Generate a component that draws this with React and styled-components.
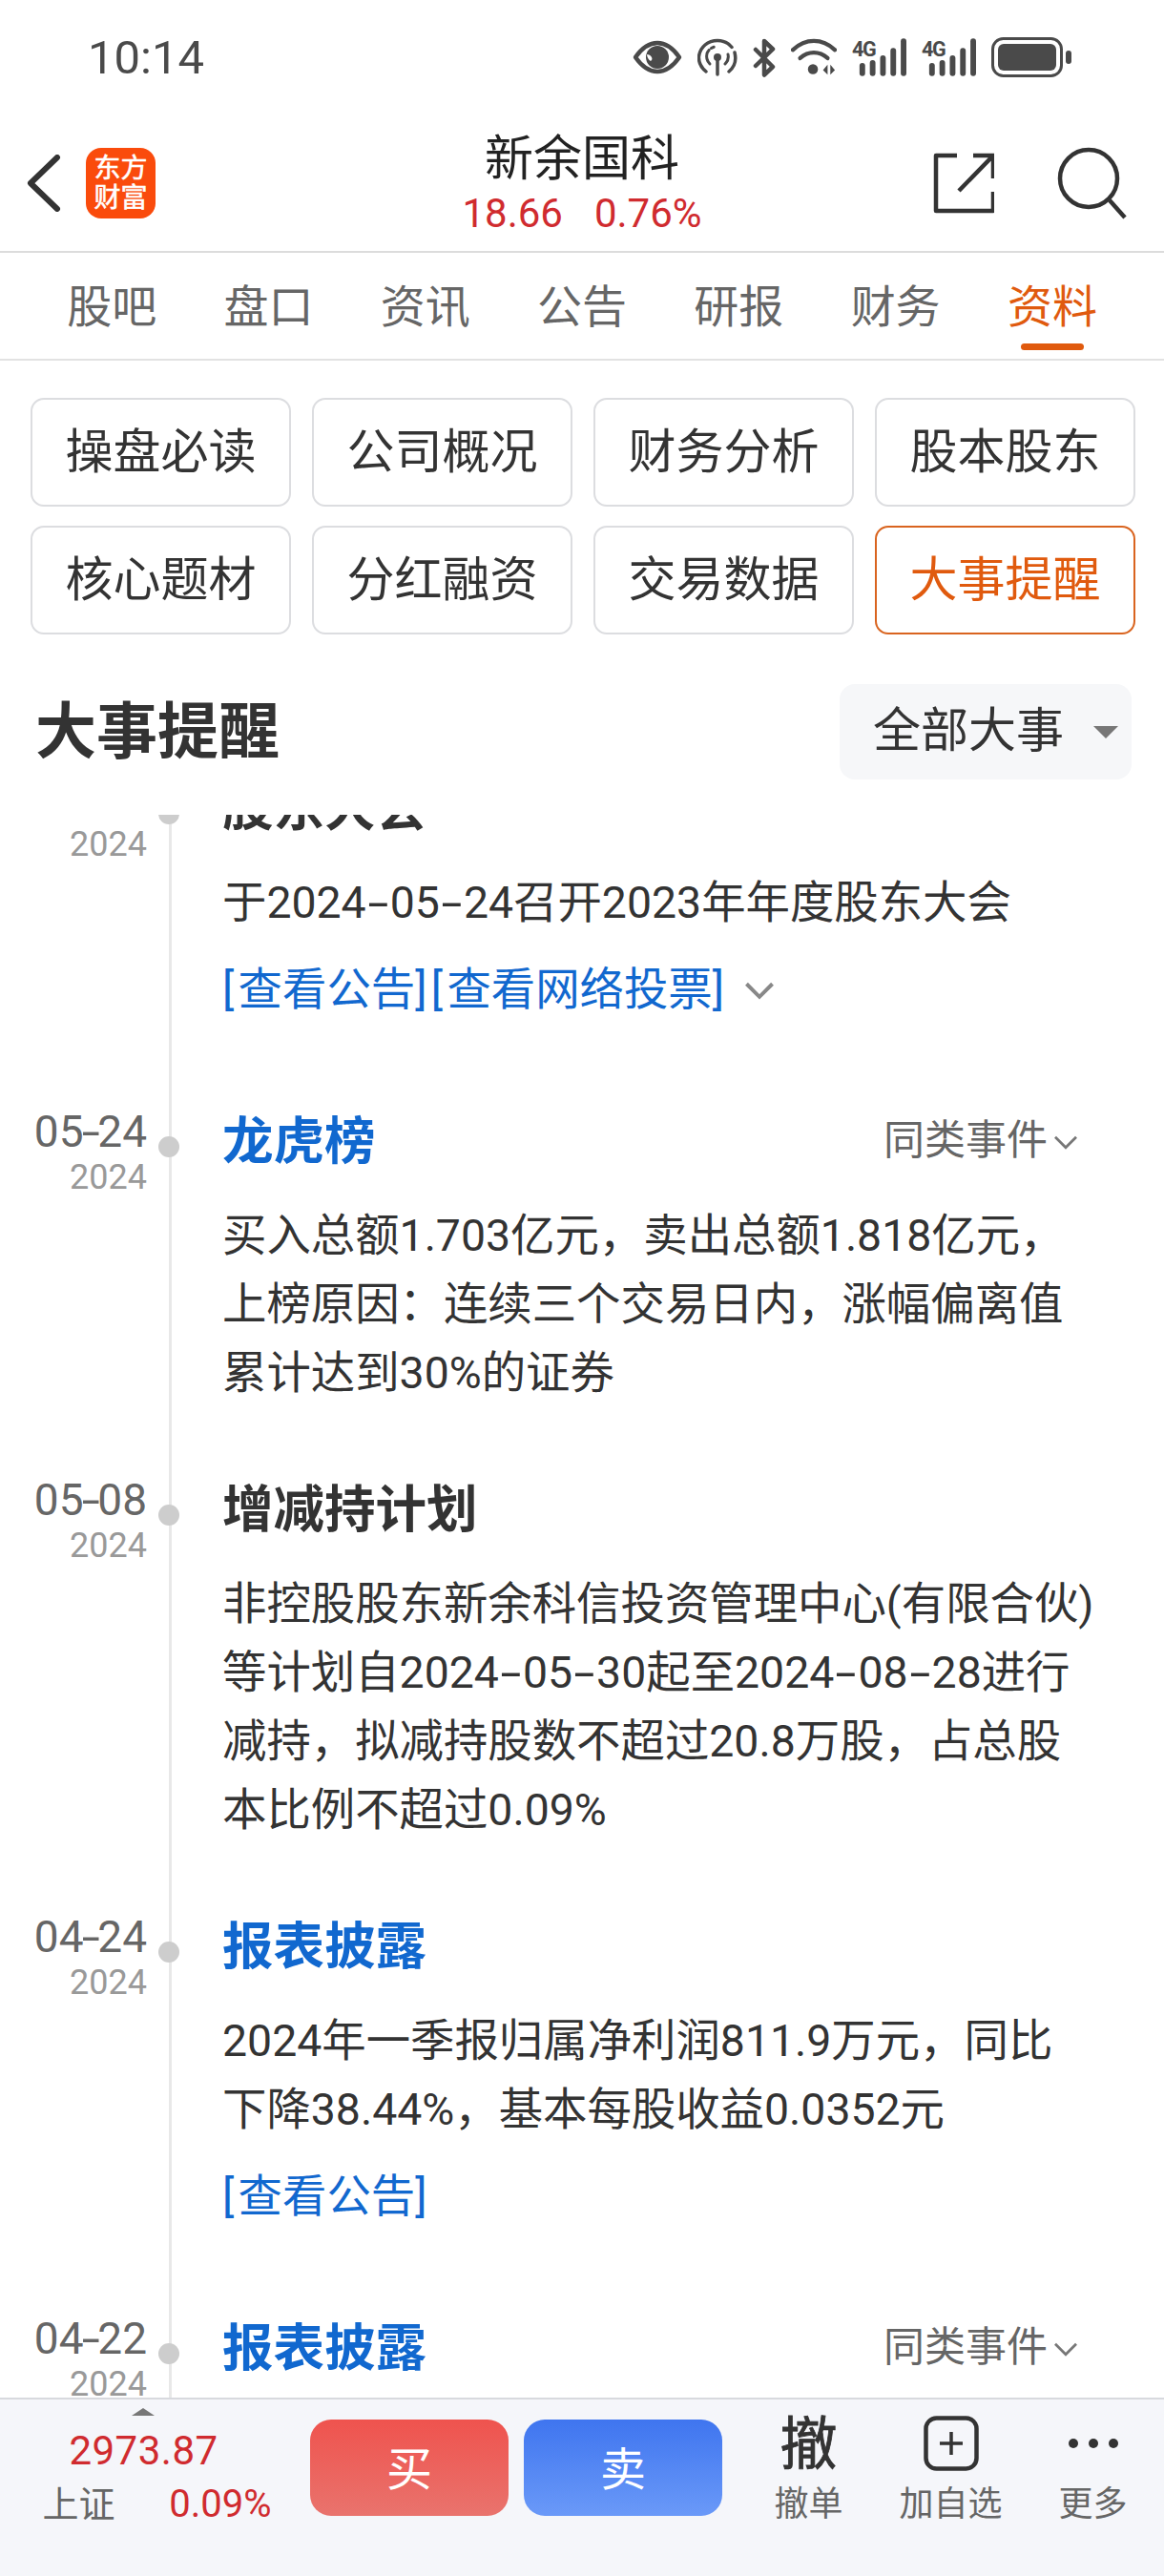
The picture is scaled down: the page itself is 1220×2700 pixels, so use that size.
import React from 'react'
import styled, { createGlobalStyle } from 'styled-components'

const GlobalStyle = createGlobalStyle`
    html, body {
        margin: 0;
        padding: 0;
        background: #fff;
    }
    * {
        box-sizing: border-box;
    }
`

const RED = '#d02b2f'
const ORANGE = '#e05a0e'
const BLUE = '#1168cf'
const ROW_GAP = 66

const TABS = ['股吧', '盘口', '资讯', '公告', '研报', '财务', '资料']
const MENU = ['操盘必读', '公司概况', '财务分析', '股本股东', '核心题材', '分红融资', '交易数据', '大事提醒']

const EVENTS = [
    {
        date: '05-24',
        title: '股东大会',
        lines: ['于2024-05-24召开2023年年度股东大会'],
        link: '[查看公告][查看网络投票]',
        expand: true,
    },
    {
        date: '05-24',
        title: '龙虎榜',
        blue: true,
        same: true,
        lines: ['买入总额1.703亿元，卖出总额1.818亿元，', '上榜原因：连续三个交易日内，涨幅偏离值', '累计达到30%的证券'],
    },
    {
        date: '05-08',
        title: '增减持计划',
        lines: ['非控股股东新余科信投资管理中心(有限合伙)', '等计划自2024-05-30起至2024-08-28进行', '减持，拟减持股数不超过20.8万股，占总股', '本比例不超过0.09%'],
    },
    {
        date: '04-24',
        title: '报表披露',
        blue: true,
        lines: ['2024年一季报归属净利润811.9万元，同比', '下降38.44%，基本每股收益0.0352元'],
        link: '[查看公告]',
    },
    {
        date: '04-22',
        title: '报表披露',
        blue: true,
        same: true,
        lines: [],
    },
]

// the app's digit font has long hyphens and wide brackets, so those get their own spans
const spaced = text =>
    text.split(/(-|\[|\])/).map((part, i) => {
        if (part === '-') return <Hyphen key={i}>-</Hyphen>
        if (part === '[' || part === ']') return <Bracket key={i}>{part}</Bracket>
        return part
    })

const dateParts = date => {
    const [month, day] = date.split('-')
    return (
        <>
            {month}
            <DateHyphen>-</DateHyphen>
            {day}
        </>
    )
}

const EyeIcon = () => (
    <svg width="52" height="36" viewBox="0 0 52 36">
        <path d="M3 18C10 8 17 3 26 3s16 5 23 15c-7 10-14 15-23 15S10 28 3 18z" fill="none" stroke="#4a4a4a" strokeWidth="4.5" strokeLinejoin="round" />
        <circle cx="26" cy="18" r="12" fill="#4a4a4a" />
        <path d="M15 15c2 0 4 1 5 3s0 3-1 4c-2-1-4-4-4-7z" fill="#fff" />
    </svg>
)

const CastIcon = () => (
    <svg width="42" height="40" viewBox="0 0 42 40" fill="none" stroke="#4a4a4a" strokeLinecap="round">
        <path d="M9 35C3 30 1 25 1.500 19 3 9 11 2.500 21 2.500c6 0 11 2 15 7" strokeWidth="3.500" />
        <path d="M39 15c2 8 0 15-6 20" strokeWidth="3.500" />
        <path d="M13 27c-3-3-4-7-3-11 1-3 4-6 8-7" strokeWidth="3" strokeDasharray="16 3 3 30" />
        <path d="M29 27c3-3 4-6 3-10" strokeWidth="3" />
        <circle cx="21" cy="20" r="4" fill="#4a4a4a" stroke="none" />
        <path d="M21 22v16" strokeWidth="3.500" />
    </svg>
)

const BluetoothIcon = () => (
    <svg width="24" height="41" viewBox="0 0 24 41" fill="none" stroke="#4a4a4a" strokeWidth="4.500" strokeLinejoin="round" strokeLinecap="round">
        <path d="M3 12l18 18-9 8.500V3l9 8.500L3 29" />
    </svg>
)

const WifiIcon = () => (
    <svg width="48" height="40" viewBox="0 0 50 40" fill="none" stroke="#4a4a4a" strokeWidth="4.500" strokeLinecap="round">
        <path d="M2 12C16-1 34-1 48 12" />
        <path d="M10 21c9-8 21-8 30 0" />
        <circle cx="24" cy="33" r="5.500" fill="#4a4a4a" stroke="none" />
        <path d="M40 28v11l-5-5zM43 28v11l5-5z" fill="#4a4a4a" stroke="none" />
    </svg>
)

const SignalIcon = () => (
    <svg width="57" height="40" viewBox="0 0 58 40">
        <text x="0" y="19" fontFamily="Roboto, sans-serif" fontWeight="700" fontSize="22" letterSpacing="-1.500" fill="#4a4a4a">4G</text>
        <g fill="#4a4a4a">
            <rect x="8" y="26" width="6" height="14" rx="3" />
            <rect x="19" y="23" width="6" height="17" rx="3" />
            <rect x="30" y="18" width="6" height="22" rx="3" />
            <rect x="41" y="10" width="6" height="30" rx="3" />
            <rect x="52" y="0" width="6" height="40" rx="3" />
        </g>
    </svg>
)

const BatteryIcon = () => (
    <svg width="84" height="42" viewBox="0 0 84 42">
        <rect x="1.500" y="1.500" width="72" height="39" rx="11" fill="none" stroke="#4a4a4a" strokeWidth="3" />
        <rect x="7" y="7" width="61" height="28" rx="6" fill="#4a4a4a" />
        <rect x="78" y="14" width="6" height="14" rx="3" fill="#4a4a4a" />
    </svg>
)

const BackIcon = () => (
    <svg width="36" height="60" viewBox="0 0 36 60" fill="none" stroke="#333" strokeWidth="6" strokeLinecap="round" strokeLinejoin="round">
        <path d="M32 3L4 30l28 27" />
    </svg>
)

const ShareIcon = () => (
    <svg width="64" height="64" viewBox="0 0 64 64" fill="none" stroke="#333" strokeWidth="4.500">
        <path d="M25 3H3v58h60V41" strokeLinejoin="round" />
        <path d="M42 3h21v24M63 3L27 40" />
    </svg>
)

const SearchIcon = () => (
    <svg width="74" height="76" viewBox="0 0 74 76" fill="none" stroke="#333" strokeWidth="4.500">
        <circle cx="33" cy="33" r="30" />
        <path d="M55 56l16 18" />
    </svg>
)

const ChevronDown = ({ size = 28, color = '#777', weight = 3 }) => (
    <svg width={size} height={size * 0.6} viewBox="0 0 28 17" fill="none" stroke={color} strokeWidth={weight}>
        <path d="M2 2l12 12L26 2" />
    </svg>
)

const PlusBoxIcon = () => (
    <svg width="58" height="58" viewBox="0 0 58 58" fill="none" stroke="#333">
        <rect x="2.500" y="2.500" width="53" height="53" rx="11" strokeWidth="4.500" />
        <path d="M29 17v24M17 29h24" strokeWidth="3.500" />
    </svg>
)

const App = () => {
    return (
        <Page>
            <GlobalStyle />
            <StatusBar>
                <Clock>10:14</Clock>
                <StatusIcons>
                    <EyeIcon />
                    <CastIcon />
                    <BluetoothIcon />
                    <WifiIcon />
                    <SignalIcon />
                    <SignalIcon />
                    <BatteryIcon />
                </StatusIcons>
            </StatusBar>

            <Header>
                <HeaderLeft>
                    <BackIcon />
                    <Logo>
                        <span>东方</span>
                        <span>财富</span>
                    </Logo>
                </HeaderLeft>
                <HeaderCenter>
                    <StockName>新余国科</StockName>
                    <Quote>
                        <span>18.66</span>
                        <span>0.76%</span>
                    </Quote>
                </HeaderCenter>
                <HeaderRight>
                    <ShareIcon />
                    <SearchIcon />
                </HeaderRight>
            </Header>

            <TabBar>
                {TABS.map(tab => (
                    <Tab key={tab} $active={tab === '资料'}>{tab}</Tab>
                ))}
            </TabBar>

            <MenuGrid>
                {MENU.map(item => (
                    <MenuButton key={item} $active={item === '大事提醒'}>{item}</MenuButton>
                ))}
            </MenuGrid>

            <SectionHead>
                <SectionTitle>大事提醒</SectionTitle>
                <Filter>
                    全部大事
                    <FilterArrow />
                </Filter>
            </SectionHead>

            <Timeline>
                <TimelineInner>
                    {EVENTS.map((ev, i) => (
                        <EventRow key={i}>
                            <DateCol>
                                <DateDay>{dateParts(ev.date)}</DateDay>
                                <DateYear>2024</DateYear>
                            </DateCol>
                            <Rail />
                            <EventBody>
                                <TitleRow>
                                    <EventTitle $blue={ev.blue}>{ev.title}</EventTitle>
                                    {ev.same && (
                                        <SameKind>
                                            同类事件
                                            <ChevronDown size={26} />
                                        </SameKind>
                                    )}
                                </TitleRow>
                                <Lines>
                                    {ev.lines.map(line => (
                                        <Line key={line}>{spaced(line)}</Line>
                                    ))}
                                </Lines>
                                {ev.link && (
                                    <LinkRow>
                                        <span>{spaced(ev.link)}</span>
                                        {ev.expand && <ChevronDown size={32} color="#888" weight={3.5} />}
                                    </LinkRow>
                                )}
                            </EventBody>
                        </EventRow>
                    ))}
                </TimelineInner>
            </Timeline>

            <BottomBar>
                <IndexBox>
                    <IndexArrow />
                    <IndexValue>2973.87</IndexValue>
                    <IndexRow>
                        <IndexName>上证</IndexName>
                        <IndexChange>0.09%</IndexChange>
                    </IndexRow>
                </IndexBox>
                <TradeButton $kind="buy">买</TradeButton>
                <TradeButton $kind="sell">卖</TradeButton>
                <Actions>
                    <Action>
                        <ActionIcon><CancelGlyph>撤</CancelGlyph></ActionIcon>
                        <ActionLabel>撤单</ActionLabel>
                    </Action>
                    <Action>
                        <ActionIcon><PlusBoxIcon /></ActionIcon>
                        <ActionLabel>加自选</ActionLabel>
                    </Action>
                    <Action>
                        <ActionIcon>
                            <Dots>
                                <i />
                                <i />
                                <i />
                            </Dots>
                        </ActionIcon>
                        <ActionLabel>更多</ActionLabel>
                    </Action>
                </Actions>
            </BottomBar>
        </Page>
    )
}

export default App

const Page = styled.div`
    width: 1220px;
    height: 2700px;
    display: flex;
    flex-direction: column;
    overflow: hidden;
    background: #fff;
    color: #333;
    font-family: Roboto, 'Noto Sans CJK SC', sans-serif;
`

const StatusBar = styled.div`
    height: 120px;
    flex-shrink: 0;
    display: flex;
    align-items: center;
    justify-content: space-between;
    padding: 0 97px 0 92px;
`

const Clock = styled.div`
    font-size: 49px;
    color: #4a4a4a;
    line-height: 1;
`

const StatusIcons = styled.div`
    display: flex;
    align-items: center;
    gap: 16px;
`

const Header = styled.div`
    height: 145px;
    flex-shrink: 0;
    display: grid;
    grid-template-columns: 1fr auto 1fr;
    align-items: center;
    padding: 0 28px;
    border-bottom: 2px solid #dcdcdc;
`

const HeaderLeft = styled.div`
    display: flex;
    align-items: center;
    gap: 26px;
`

const Logo = styled.div`
    width: 73px;
    height: 74px;
    border-radius: 16px;
    background: #fa4b0c;
    color: #fff;
    font-size: 28px;
    line-height: 31px;
    -webkit-text-stroke: 0.6px #fff;
    display: flex;
    flex-direction: column;
    align-items: center;
    justify-content: center;
`

const HeaderCenter = styled.div`
    display: flex;
    flex-direction: column;
    align-items: center;
`

const StockName = styled.div`
    font-size: 51px;
    line-height: 64px;
    color: #222;
`

const Quote = styled.div`
    display: flex;
    gap: 33px;
    font-size: 42px;
    line-height: 50px;
    color: ${RED};
`

const HeaderRight = styled.div`
    display: flex;
    align-items: center;
    justify-content: flex-end;
    gap: 66px;
    padding-right: 10px;
`

const TabBar = styled.div`
    height: 113px;
    flex-shrink: 0;
    display: grid;
    grid-template-columns: repeat(7, 164.3px);
    padding: 0 35px;
    border-bottom: 2px solid #e2e2e2;
`

const Tab = styled.div`
    position: relative;
    display: flex;
    align-items: center;
    justify-content: center;
    padding-bottom: 6px;
    font-size: 47px;
    color: ${props => (props.$active ? ORANGE : '#666')};

    ${props =>
        props.$active &&
        `&::after {
            content: '';
            position: absolute;
            left: 50%;
            bottom: 9px;
            width: 66px;
            height: 7px;
            margin-left: -33px;
            border-radius: 4px;
            background: ${ORANGE};
        }`}
`

const MenuGrid = styled.div`
    flex-shrink: 0;
    display: grid;
    grid-template-columns: repeat(4, 273px);
    grid-auto-rows: 114px;
    column-gap: 22px;
    row-gap: 20px;
    padding: 39px 0 0 32px;
`

const MenuButton = styled.div`
    display: flex;
    align-items: center;
    justify-content: center;
    padding-bottom: 11px;
    font-size: 50px;
    border-radius: 14px;
    border: 2px solid ${props => (props.$active ? '#d9641f' : '#dcdde0')};
    color: ${props => (props.$active ? ORANGE : '#333')};
`

const SectionHead = styled.div`
    flex-shrink: 0;
    display: flex;
    align-items: center;
    justify-content: space-between;
    height: 100px;
    margin: 52px 0 37px;
    padding: 0 34px 0 37px;
`

const SectionTitle = styled.div`
    padding-bottom: 12px;
    font-size: 64px;
    font-weight: 700;
    color: #333;
`

const Filter = styled.div`
    width: 306px;
    height: 100px;
    display: flex;
    align-items: center;
    padding: 0 0 12px 35px;
    font-size: 50px;
    color: #333;
    border-radius: 16px;
    background: #f6f7f9;
`

const FilterArrow = styled.span`
    width: 0;
    height: 0;
    margin: 12px 0 0 31px;
    border-left: 13px solid transparent;
    border-right: 13px solid transparent;
    border-top: 13px solid #777;
`

const Timeline = styled.div`
    flex: 1;
    min-height: 0;
    overflow: hidden;
`

const TimelineInner = styled.div`
    margin-top: -48px;
`

const EventRow = styled.div`
    display: grid;
    grid-template-columns: 166px 22px 1fr;
    padding-bottom: ${ROW_GAP}px;
`

const DateCol = styled.div`
    text-align: right;
    padding: 3px 12px 0 0;
`

const DateDay = styled.div`
    font-size: 46px;
    line-height: 56px;
    color: #666;
`

const DateHyphen = styled.span`
    display: inline-block;
    width: 0.32em;
    text-align: center;
    transform: scaleX(1.5);
`

const DateYear = styled.div`
    font-size: 36px;
    line-height: 40px;
    color: #999;
`

const Rail = styled.div`
    position: relative;

    &::before {
        content: '';
        position: absolute;
        left: 11px;
        top: 0;
        bottom: -${ROW_GAP}px;
        width: 3px;
        background: #e8e8e8;
    }

    &::after {
        content: '';
        position: absolute;
        left: 0;
        top: 36px;
        width: 22px;
        height: 22px;
        border-radius: 50%;
        background: #cdcdcd;
    }
`

const EventBody = styled.div`
    padding-left: 45px;
    min-width: 0;
`

const TitleRow = styled.div`
    display: flex;
    align-items: center;
    justify-content: space-between;
    height: 72px;
    margin-bottom: 32px;
    padding-right: 90px;
`

const EventTitle = styled.div`
    font-size: 53.500px;
    font-weight: 700;
    color: ${props => (props.$blue ? BLUE : '#333')};
`

const SameKind = styled.div`
    display: flex;
    align-items: center;
    gap: 6px;
    font-size: 43px;
    color: #666;

    svg {
        margin-top: 14px;
    }
`

const Lines = styled.div`
    display: flex;
    flex-direction: column;
`

const Line = styled.div`
    font-size: 46.400px;
    line-height: 72px;
    color: #333;
    white-space: nowrap;
`

const Hyphen = styled.span`
    display: inline-block;
    width: 0.54em;
    text-align: center;
    transform: scaleX(1.7);
`

const Bracket = styled.span`
    letter-spacing: 4.300px;
`

const LinkRow = styled.div`
    display: flex;
    align-items: center;
    gap: 17px;
    margin: 19px 0 16px;
    font-size: 46.400px;
    line-height: 72px;
    color: ${BLUE};
    white-space: nowrap;

    svg {
        margin-top: 4px;
    }
`

const BottomBar = styled.div`
    position: relative;
    height: 187px;
    flex-shrink: 0;
    display: flex;
    align-items: flex-start;
    background: #f5f6fa;
    border-top: 2px solid #d8d9de;
`

const IndexBox = styled.div`
    width: 325px;
    flex-shrink: 0;
    display: flex;
    flex-direction: column;
    align-items: center;
    padding-top: 29px;
`

const IndexArrow = styled.span`
    position: absolute;
    left: 138px;
    top: 9px;
    width: 0;
    height: 0;
    border-left: 12px solid transparent;
    border-right: 12px solid transparent;
    border-bottom: 8px solid #777;
`

const IndexValue = styled.div`
    margin-right: 24px;
    font-size: 42px;
    line-height: 50px;
    letter-spacing: 0.5px;
    color: ${RED};
`

const IndexRow = styled.div`
    display: flex;
    justify-content: space-between;
    width: 240px;
    margin-top: 6px;
    margin-left: 4px;
    line-height: 50px;
`

const IndexName = styled.span`
    font-size: 38px;
    color: #666;
`

const IndexChange = styled.span`
    font-size: 40px;
    color: ${RED};
`

const TradeButton = styled.div`
    width: 208px;
    height: 101px;
    margin: 21px 16px 0 0;
    padding-bottom: 6px;
    flex-shrink: 0;
    display: flex;
    align-items: center;
    justify-content: center;
    border-radius: 22px;
    font-size: 48px;
    color: #fff;
    background: ${props =>
        props.$kind === 'buy'
            ? 'linear-gradient(180deg, #ef534e, #e9736d)'
            : 'linear-gradient(180deg, #3f75ef, #6a99f8)'};
`

const Actions = styled.div`
    display: grid;
    grid-template-columns: repeat(3, 149px);
    padding-top: 16px;
`

const Action = styled.div`
    display: flex;
    flex-direction: column;
    align-items: center;
`

const ActionIcon = styled.div`
    height: 60px;
    display: flex;
    align-items: center;
    justify-content: center;
`

const CancelGlyph = styled.span`
    margin-top: 4px;
    font-size: 60px;
    line-height: 60px;
    -webkit-text-stroke: 0.8px #333;
    color: #333;
`

const Dots = styled.div`
    display: flex;
    gap: 11px;

    i {
        width: 10px;
        height: 10px;
        border-radius: 50%;
        background: #333;
    }
`

const ActionLabel = styled.div`
    margin-top: 9px;
    font-size: 36px;
    line-height: 50px;
    color: #666;
`
